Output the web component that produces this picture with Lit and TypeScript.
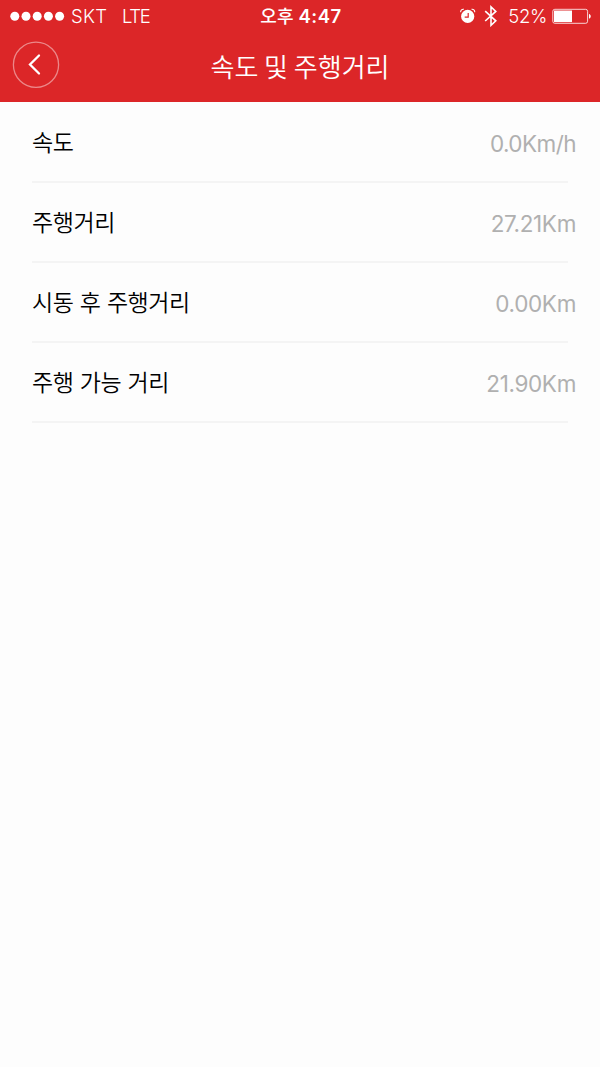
import { LitElement, html, svg, css } from "lit";
import { customElement, state } from "lit/decorators.js";

@customElement("status-bar")
class StatusBar extends LitElement {
  static styles = css`
    :host { display: grid; grid-template-columns: 1fr auto 1fr; align-items: center; height: 32px; padding: 0 9px 0 10px; color: #fff; font: 18.5px/32px Inter, "Noto Sans CJK KR", sans-serif; }
    .side { display: flex; align-items: center; font-weight: 300; white-space: nowrap; }
    .right { justify-content: flex-end; }
    .dots { margin-right: 5px; }
    .carrier { width: 51px; letter-spacing: 0.3px; }
    .network { letter-spacing: -1.3px; }
    .time { display: flex; gap: 5px; padding-left: 1px; font-size: 18.5px; font-weight: 600; letter-spacing: 0.5px; }
    .half { font: 500 18px/31px "Noto Sans CJK KR", sans-serif; letter-spacing: 0; }
    .percent { letter-spacing: -0.3px; margin: 0 5px 0 10px; }
    .alarm { margin-right: 8px; }
    svg { display: block; flex: none; }
  `;
  render() {
    return html`
      <div class="side">
        <svg class="dots" width="56" height="10" viewBox="0 0 56 10" fill="#fff">
          ${[0, 1, 2, 3, 4].map((i) => svg`<circle cx=${4.8 + i * 11.2} cy="5.2" r="4.5"/>`)}
        </svg>
        <span class="carrier">SKT</span><span class="network">LTE</span>
      </div>
      <div class="time"><span class="half">오후</span><span>4:47</span></div>
      <div class="side right">
        <svg class="alarm" width="16" height="16" viewBox="0 0 16 16">
          <circle cx="7.7" cy="8.4" r="6.6" fill="#fff"/>
          <path d="M.7 4.2C.5 2.3 2 .9 3.9 1.3M14.7 4.2C14.9 2.3 13.4 .9 11.5 1.3" fill="none" stroke="#fff" stroke-width="1.1"/>
          <path d="M8.2 5V9.2H4.700" fill="none" stroke="#dc2628" stroke-width="1.2"/>
        </svg>
        <svg width="14" height="22" viewBox="0 0 14 22">
          <path d="M1.2 6.2L11.8 15.8L7 20.3V1.9L11.8 6.4L1.2 16" fill="none" stroke="#fff" stroke-width="1.6"/>
        </svg>
        <span class="percent">52%</span>
        <svg width="39" height="16" viewBox="0 0 39 16">
          <rect x=".8" y="1.3" width="34.8" height="14" rx="2" fill="none" stroke="#fff" stroke-opacity=".8"/>
          <path d="M2 2.5H20V14.1H2z" fill="#fff"/>
          <path d="M37 5.9C39.3 6.4 39.3 10.2 37 10.7z" fill="#fff"/>
        </svg>
      </div>`;
  }
}

@customElement("nav-bar")
class NavBar extends LitElement {
  static styles = css`
    :host { display: grid; grid-template-columns: 48px 1fr 48px; height: 70px; padding: 0 12px; color: #fff; }
    .back { width: 48px; height: 48px; margin-top: 9px; padding: 0; border: 0; background: none; }
    .title { margin: 0; text-align: center; font: 350 26px/67px "Noto Sans CJK KR", sans-serif; }
    svg { display: block; }
  `;
  render() {
    return html`
      <button class="back" aria-label="뒤로">
        <svg width="48" height="48" viewBox="0 0 48 48" fill="none" stroke="#fff">
          <circle cx="24" cy="23.8" r="22.6" stroke-opacity=".45" stroke-width="1.3"/>
          <path d="M27 14.5L18 23.5L27 32.5" stroke-width="2.3" stroke-linecap="round"/>
        </svg>
      </button>
      <h1 class="title">속도 및 주행거리</h1>`;
  }
}

@customElement("app-root")
class AppRoot extends LitElement {
  static styles = css`
    :host { display: block; min-height: 1067px; background: #fdfdfd; }
    .header { background: #dc2628; height: 102px; }
    .list { margin: 0; padding: 0 32px; }
    .row { display: flex; justify-content: space-between; box-sizing: border-box; height: 80px; border-bottom: 2px solid #f4f4f4; }
    .row:first-child { height: 81px; }
    .label { color: #000; font: 350 23px/77px "Noto Sans CJK KR", sans-serif; letter-spacing: -0.45px; word-spacing: 1.7px; }
    .row:first-child .label { line-height: 79px; }
    .value { margin: 0 -8px 0 0; color: #b0b0b0; font: 400 22.5px/81px Inter, sans-serif; letter-spacing: -0.35px; }
    .row:first-child .value { line-height: 83px; letter-spacing: -0.55px; }
  `;
  @state() rows = [
    ["속도", "0.0Km/h"],
    ["주행거리", "27.21Km"],
    ["시동 후 주행거리", "0.00Km"],
    ["주행 가능 거리", "21.90Km"],
  ];
  render() {
    return html`
      <div class="header"><status-bar></status-bar><nav-bar></nav-bar></div>
      <dl class="list">
        ${this.rows.map(([label, value]) => html`<div class="row"><dt class="label">${label}</dt><dd class="value">${value}</dd></div>`)}
      </dl>`;
  }
}
